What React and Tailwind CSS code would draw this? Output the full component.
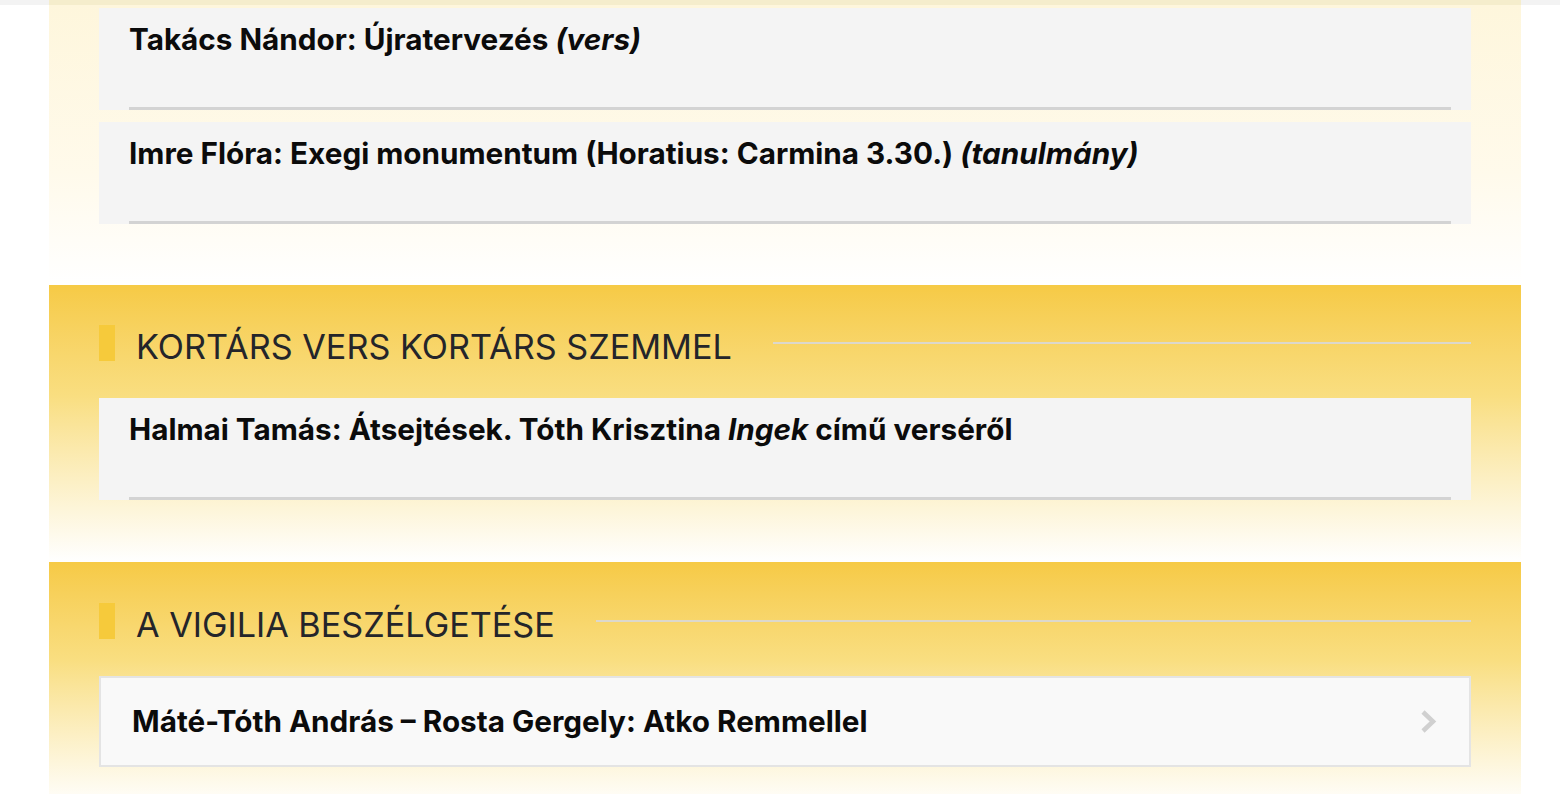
import { Fragment } from 'react';

// cikk kártya szürke háttérrel és alsó vonallal
function ArticleCard({ children }) {
  return (
    <div className="flex h-[102px] w-full flex-col justify-between bg-[#f4f4f4] pl-[30px] pr-[20px] pt-[14px]">
      <p className="text-[29.7px] font-bold leading-[1.2] text-[#0b0b0b]">{children}</p>
      <div className="h-[3px] w-full bg-[#d3d3d3]" />
    </div>
  );
}

// szekció fejléc: sárga jelölő, cím, vékony vonal
function SectionTitle({ title }) {
  return (
    <div className="flex items-center">
      <div className="h-[36px] w-[16px] bg-[#f6ca3b]" />
      <h2 className="ml-[21px] h-[36px] whitespace-nowrap text-[34.2px] font-normal leading-[44px] text-[#24252a]">{title}</h2>
      <div className="ml-[41px] h-[2px] flex-1 bg-[#dcd8cc]" />
    </div>
  );
}

export default function App() {
  return (
    <div className="min-h-screen w-full bg-white" style={{ fontFamily: 'Inter, "Noto Sans", sans-serif' }}>
      {/* felső sáv */}
      <div className="h-[5px] w-full bg-[#f3f3f3]">
        <div className="ml-[49px] h-full w-[1472px] bg-[#f5edcc]" />
      </div>

      {/* első szekció – halvány sárga */}
      <section className="ml-[49px] flex w-[1472px] flex-col gap-[12px] bg-linear-to-b from-[#fef6dc] via-[#fffaeb] via-60% to-white px-[50px] pb-[61px] pt-[3px]">
        <ArticleCard>
          Takács Nándor: Újratervezés <em className="italic">(vers)</em>
        </ArticleCard>
        <ArticleCard>
          Imre Flóra: Exegi monumentum (Horatius: Carmina 3.30.) <em className="italic">(tanulmány)</em>
        </ArticleCard>
      </section>

      {/* Kortárs vers kortárs szemmel */}
      <section className="ml-[49px] w-[1472px] bg-linear-to-b from-[#f6ca45] via-[#f9de80] via-40% to-white px-[50px] pb-[62px] pt-[40px]">
        <SectionTitle title="KORTÁRS VERS KORTÁRS SZEMMEL" />
        <div className="mt-[37px]">
          <ArticleCard>
            Halmai Tamás: Átsejtések. Tóth Krisztina <em className="italic">Ingek</em> című verséről
          </ArticleCard>
        </div>
      </section>

      {/* A Vigilia beszélgetése */}
      <section className="ml-[49px] w-[1472px] bg-linear-to-b from-[#f6ca45] via-[#f9de80] via-40% to-white px-[50px] pb-[40px] pt-[41px]">
        <SectionTitle title="A VIGILIA BESZÉLGETÉSE" />
        <div className="mt-[37px] flex h-[91px] items-center justify-between border-2 border-[#e4e4e4] bg-[#f9f9f9] pl-[31px] pr-[32px]">
          <p className="text-[29.7px] font-bold leading-[1.2] text-[#0b0b0b]">
            Máté-Tóth András – Rosta Gergely: Atko Remmellel
          </p>
          <svg width="17" height="25" viewBox="0 0 17 25" fill="none">
            <polyline points="3,3 13,12.5 3,22" stroke="#d0d0d0" strokeWidth="4.5" strokeLinejoin="miter" />
          </svg>
        </div>
      </section>
    </div>
  );
}
